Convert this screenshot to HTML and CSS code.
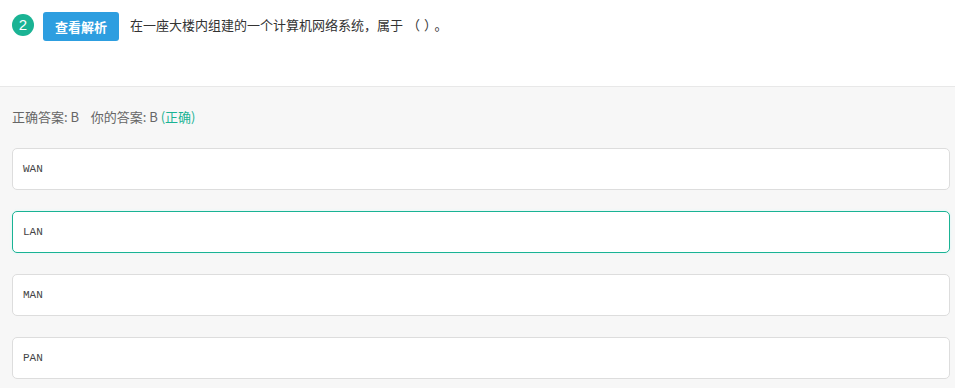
FILE: index.html
```html
<!DOCTYPE html>
<html lang="zh">
<head>
  <meta charset="UTF-8" />
  <title>题目</title>
  <link rel="stylesheet" href="styles.css">
</head>
<body>

  <div class="question">
    <span class="num">2</span>
    <button class="btn-analysis">查看解析</button>
    <span class="title">在一座大楼内组建的一个计算机网络系统，属于<span class="paren">（）</span>。</span>
  </div>

  <div class="answer-area">
    <p class="result">正确答案: B &nbsp;&nbsp; 你的答案: B <span class="ok">(正确)</span></p>

    <div class="option">WAN</div>
    <div class="option active">LAN</div>
    <div class="option">MAN</div>
    <div class="option">PAN</div>
  </div>

</body>
</html>
```

FILE: styles.css
```css
* {
  margin: 0;
  padding: 0;
  box-sizing: border-box;
}

body {
  font-family: "Noto Sans CJK SC", "Liberation Sans", sans-serif;
  background: #f7f7f7;
  color: #333;
}

.question {
  background: white;
  height: 87px;
  border-bottom: 1px solid #e8e8e8;
  padding: 12px 12px 0 12px;
  display: flex;
  align-items: flex-start;
}

.num {
  width: 22px;
  height: 22px;
  margin-top: 2px;
  border-radius: 50%;
  background: #1ab394;
  color: white;
  font-family: "Liberation Sans", sans-serif;
  font-size: 15px;
  line-height: 22px;
  text-align: center;
}

.btn-analysis {
  margin-left: 9px;
  width: 76px;
  height: 29px;
  background: #2d9ee0;
  color: white;
  border: none;
  border-radius: 3px;
  font-family: "Noto Sans CJK SC", sans-serif;
  font-size: 13px;
  font-weight: bold;
  cursor: pointer;
}

.title {
  margin-left: 11px;
  font-size: 13px;
  line-height: 26px;
  color: #333;
}

.paren {
  letter-spacing: 4px;
  margin-left: 4px;
}

.answer-area {
  padding: 20px 5px 8px 12px;
}

.result {
  font-size: 13px;
  color: #666;
  line-height: 20px;
  margin-bottom: 21px;
}

.ok {
  color: #1ab394;
}

.option {
  height: 42px;
  background: white;
  border: 1px solid #ddd;
  border-radius: 5px;
  padding-left: 10px;
  margin-bottom: 21px;
  font-family: "Liberation Mono", monospace;
  font-size: 11px;
  font-weight: normal;
  line-height: 40px;
  color: #444;
}

.option.active {
  border-color: #1ab394;
  box-shadow: 0 0 3px #d8f6f6;
}
```
